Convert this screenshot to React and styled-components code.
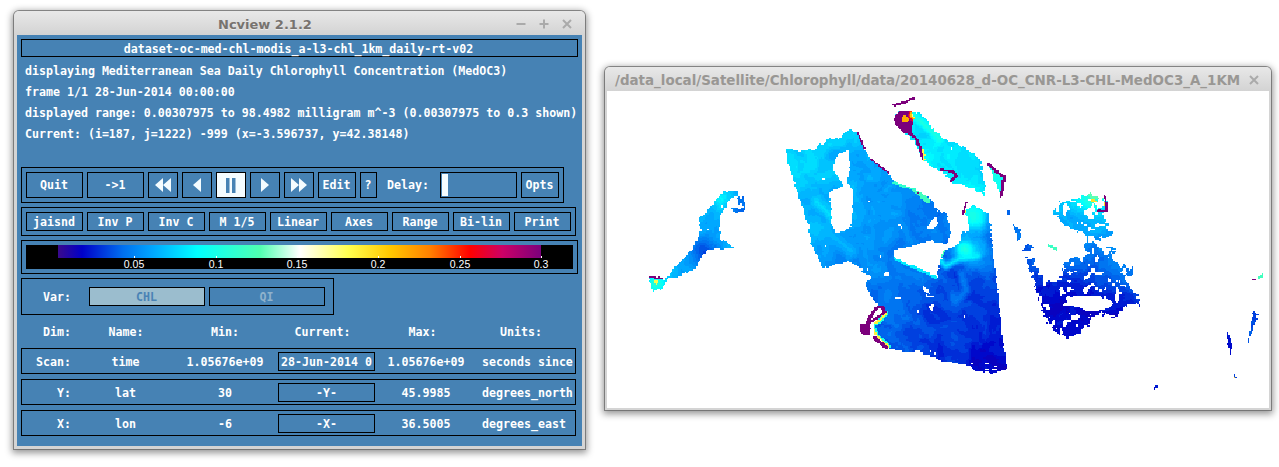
import React, { useMemo } from "react";
import styled, { createGlobalStyle } from "styled-components";

const BLUE = "#4682b4";
const PALE = "#f4fcff";

const GlobalStyle = createGlobalStyle`
  html, body {
    margin: 0;
    background: #fff;
  }
`;

/* colormap shared by the colour bar and the map */
const STOPS = [
  [0, [58, 10, 140]], [0.05, [0, 0, 200]], [0.135, [0, 112, 240]], [0.197, [0, 168, 255]],
  [0.288, [0, 255, 255]], [0.418, [80, 255, 176]], [0.5, [255, 255, 255]], [0.6, [255, 255, 80]],
  [0.687, [255, 200, 0]], [0.77, [255, 128, 0]], [0.853, [255, 0, 0]], [0.92, [204, 0, 102]],
  [1, [124, 0, 124]],
];

const colorAt = (t) => {
  let i = 0;
  while (i < STOPS.length - 2 && t > STOPS[i + 1][0]) i++;
  const [a, ca] = STOPS[i];
  const [b, cb] = STOPS[i + 1];
  const k = Math.min(1, Math.max(0, (t - a) / (b - a)));
  const c = ca.map((v, n) => Math.round(v + (cb[n] - v) * k));
  return `rgb(${c[0]},${c[1]},${c[2]})`;
};

const BAR_GRADIENT = `linear-gradient(90deg, ${STOPS.map(([p, c]) => `rgb(${c.join(",")}) ${p * 100}%`).join(", ")})`;

/* seeded noise */
const hash = (x, y) => {
  const s = Math.sin(x * 127.1 + y * 311.7) * 43758.5453;
  return s - Math.floor(s);
};
const noise = (x, y) => {
  const ix = Math.floor(x);
  const iy = Math.floor(y);
  const fx = x - ix;
  const fy = y - iy;
  const ux = fx * fx * (3 - 2 * fx);
  const uy = fy * fy * (3 - 2 * fy);
  const top = hash(ix, iy) + (hash(ix + 1, iy) - hash(ix, iy)) * ux;
  const bot = hash(ix, iy + 1) + (hash(ix + 1, iy + 1) - hash(ix, iy + 1)) * ux;
  return top + (bot - top) * uy;
};
const swirl = (x, y) => {
  const wx = x + 14 * noise(x / 22, y / 22);
  const wy = y + 14 * noise(x / 22 + 9, y / 22 + 4);
  return noise(wx / 20, wy / 20) * 0.5 + noise(wx / 7, wy / 7) * 0.35 + noise(wx / 3, wy / 3) * 0.15 - 0.5;
};

const poly = (flat) => {
  const pts = [];
  for (let i = 0; i < flat.length; i += 2) pts.push([flat[i], flat[i + 1]]);
  const xs = pts.map((p) => p[0]);
  const ys = pts.map((p) => p[1]);
  return { pts, x0: Math.min(...xs), x1: Math.max(...xs), y0: Math.min(...ys), y1: Math.max(...ys) };
};

const inPoly = ({ pts, x0, x1, y0, y1 }, x, y) => {
  if (x < x0 || x > x1 || y < y0 || y > y1) return false;
  let inside = false;
  for (let i = 0, j = pts.length - 1; i < pts.length; j = i++) {
    const [ax, ay] = pts[i];
    const [bx, by] = pts[j];
    if (ay > y !== by > y && x < ((bx - ax) * (y - ay)) / (by - ay) + ax) inside = !inside;
  }
  return inside;
};

const lineDist = (pts, x, y) => {
  if (pts.length === 1) return Math.hypot(x - pts[0][0], y - pts[0][1]);
  let best = 1e9;
  for (let i = 1; i < pts.length; i++) {
    const [ax, ay] = pts[i - 1];
    const [bx, by] = pts[i];
    const dx = bx - ax;
    const dy = by - ay;
    const k = Math.max(0, Math.min(1, ((x - ax) * dx + (y - ay) * dy) / (dx * dx + dy * dy)));
    best = Math.min(best, Math.hypot(x - ax - k * dx, y - ay - k * dy));
  }
  return best;
};

const REGIONS = [
  { // western basin, Tyrrhenian, Ionian
    shape: poly([785,148,800,150,813,148,820,143,827,138,838,137,840,135,848,128,857,132,863,147,870,158,883,168,893,180,915,188,923,195,930,198,937,210,945,212,950,232,945,242,927,240,910,245,893,248,893,257,917,267,937,276,938,260,942,250,958,243,960,232,968,230,967,217,962,210,973,204,980,208,988,213,1005,368,987,373,960,363,940,360,917,350,897,350,885,345,873,333,873,323,883,312,878,305,870,295,864,283,872,275,862,273,860,267,847,260,840,262,822,267,810,243,807,223,797,193,787,162]),
    jitter: 1.2, speck: 0.0035, value: (x, y) => 0.665 - 0.000445 * x - 0.00046 * y,
  },
  { // Alboran
    shape: poly([737,190,722,190,712,203,698,217,700,230,690,250,682,258,673,267,668,275,647,277,652,290,660,288,667,278,675,277,695,267,700,255,710,247,735,248,720,238,718,227,720,213,727,200,737,193]),
    jitter: 1.4, speck: 0.006, value: () => 0.2,
  },
  { shape: poly([730,207,742,207,742,211,730,211]), jitter: 1.5, value: () => 0.14 },
  { shape: poly([737,195,742,195,743,210,738,210]), jitter: 1.5, holes: 0.6, value: () => 0.14 },
  { // Adriatic
    shape: poly([893,117,898,108,910,112,920,113,928,122,940,137,957,143,980,158,985,197,973,187,957,183,950,180,940,170,933,167,920,157,913,140,902,130]),
    jitter: 1.8, speck: 0.004, value: (x, y) => 0.27 - 0.0006 * (x - 900) + 0.0005 * (y - 120),
  },
  { shape: poly([987,163,1003,175,1000,195,990,172]), jitter: 0.8, value: () => 0.33 },
  { // Aegean and Levantine part
    shape: poly([1053,203,1072,198,1090,193,1107,200,1103,213,1107,227,1115,232,1100,237,1103,247,1117,248,1107,255,1120,263,1133,270,1123,277,1130,287,1137,297,1140,305,1127,302,1120,310,1113,318,1103,312,1093,317,1087,312,1090,320,1077,333,1067,338,1053,327,1047,323,1025,257,1033,258,1037,272,1050,278,1057,283,1063,263,1073,257,1088,253,1082,247,1088,237,1073,227,1063,223,1053,210]),
    jitter: 2.6, speck: 0.008, holes: 0.76, value: (x, y) => Math.max(0.05, 0.25 - 0.0017 * (y - 195) - 0.0003 * (1100 - x)),
  },
  { shape: poly([1006,209,1009,209,1009,213,1006,213]), jitter: 0.6, value: () => 0.13 },
  { shape: poly([1012,223,1020,228,1020,237,1017,239]), jitter: 1, value: () => 0.14 },
  { shape: poly([1025,242,1032,247,1027,250,1022,250]), jitter: 1, value: () => 0.12 },
  { shape: poly([1047,243,1057,247,1055,249,1047,245]), jitter: 0.7, value: () => 0.38 },
  { shape: poly([1256,276,1262,273,1263,276,1258,278]), jitter: 0.5, value: () => 0.38 },
  { shape: poly([1225,327,1232,345,1229,353,1227,343]), jitter: 0.7, value: () => 0.07 },
  { shape: poly([1232,368,1235,377,1233,377]), jitter: 0.5, value: () => 0.1 },
  { shape: poly([1252,310,1258,313,1252,327,1247,343,1246,343,1249,327]), jitter: 0.8, holes: 0.75, value: () => 0.1 },
  { shape: poly([1152,388,1156,383,1158,386,1153,389]), jitter: 0.5, value: () => 0.05 },
  { shape: poly([1220,287,1228,284,1228,286,1221,288]), jitter: 0.5, holes: 0.6, value: () => 0.28 },
  { shape: poly([892,118,899,109,910,110,913,118,910,131,903,132,897,127]), jitter: 1, value: () => 1 },
  { shape: poly([858,323,868,322,870,330,866,335,860,333]), jitter: 0.9, value: () => 1 },
];

const HOLES = [
  poly([847,149,849,165,846,182,852,190,851,210,850,225,842,231,835,232,830,222,830,205,828,192,835,188,843,185,840,180,833,170,833,160,838,153]),
  poly([925,226,930,220,935,215,937,222,931,228]),
  poly([922,286,927,288,929,293,924,291]),
  poly([925,294,934,295,934,296,925,296]),
  poly([928,305,933,303,932,310,929,309]),
  poly([1065,295,1100,295,1113,302,1103,310,1088,310,1073,305,1067,303]),
  poly([882,272,888,271,888,275,883,275]),
  poly([895,296,899,296,899,298,895,298]),
  poly([1093,201,1103,199,1103,206,1096,208]),
];

const chain = (flat, w, t, soft) => ({ ...poly(flat), w, t, soft });

const LINES = [
  chain([937,257,945,265,957,258,977,255], 5, 0.3, true),
  chain([960,273,965,290,955,300], 6, 0.16, true),
  chain([840,225,815,200], 8, 0.27, true),
  chain([825,230,850,250], 10, 0.22, true),
  chain([912,114,925,125,938,137], 6, 0.36, true),
  chain([895,257,935,275], 2.5, 0.27),
  chain([942,250,937,258], 2, 0.4),
  chain([912,187,927,200], 2.5, 0.4),
  chain([893,182,915,188], 1.6, 0.36),
  chain([857,132,863,147], 0.8, 1),
  chain([870,158,888,172], 0.8, 1),
  chain([917,192], 1, 1),
  chain([962,212,965,202], 2.4, 0.62),
  chain([962,212,965,202], 1, 1),
  chain([893,104,905,101,912,97], 1.3, 1),
  chain([904,118], 3.5, 0.72),
  chain([921,150,922,158], 2.4, 0.6),
  chain([905,130,915,137,919,148,921,157], 1.4, 1),
  chain([940,169,952,170,955,175,950,180], 1.2, 1),
  chain([987,163,995,170,1003,176,1001,190,1000,195], 1.4, 1),
  chain([1090,194,1100,196], 3, 0.42),
  chain([1092,199,1097,205,1103,203], 1.6, 0.65),
  chain([1103,195,1106,205,1105,210,1097,210], 1.1, 1),
  chain([648,276,660,277], 0.9, 1),
  chain([655,281], 2, 0.6),
  chain([885,312,878,320,871,323,875,335,887,345], 2.6, 0.33),
  chain([885,312,878,320,871,323,875,335,887,345], 1.2, 0.62),
  chain([866,322,871,313,875,307,881,306,884,311], 1.6, 1),
  chain([884,311,877,316,869,321], 1.4, 1),
  chain([873,337,885,346], 1.8, 1),
  chain([1252,278,1257,278], 0.7, 1),
  chain([1234,376], 0.8, 0.7),
];

const SPOTS = [
  [972, 215, 17, 0.19], [975, 250, 15, 0.1], [962, 248, 9, 0.17], [720, 195, 12, 0.08],
  [655, 283, 10, 0.14], [705, 250, 15, -0.1], [1090, 198, 12, 0.12],
];

const MAP_BINS = 72;

const buildMap = () => {
  const bins = Array.from({ length: MAP_BINS }, () => []);
  const block = 1.4;
  for (let py = 91; py < 408; py++) {
    const y = Math.floor(py / block) * block;
    let runBin = -1;
    let runX = 0;
    const flush = (end) => {
      if (runBin >= 0) bins[runBin].push(`M${runX} ${py}h${end - runX}v1h-${end - runX}z`);
    };
    for (let px = 607; px < 1269; px++) {
      const x = Math.floor(px / block) * block;
      const jx = noise(x / 2.6, y / 2.6) - 0.5;
      const jy = noise(x / 2.6 + 31, y / 2.6 + 17) - 0.5;
      let t = -1;
      for (const r of REGIONS) {
        if (inPoly(r.shape, x + jx * r.jitter * 2, y + jy * r.jitter * 2)) {
          const holey = r.holes && noise(x / 4, y / 4) > r.holes;
          const bottom = r.speck && y > 362 && hash(Math.floor(x / 3), Math.floor(y / 1.5)) < 0.12;
          const speck = r.speck && hash(Math.floor(x / 2.1), Math.floor(y / 2.1)) < r.speck;
          if (!holey && !bottom && !speck) t = r.value(x, y) >= 0.9 ? 1 : r.value(x, y) + swirl(x, y) * 0.075;
        }
      }
      if (t >= 0 && HOLES.some((h) => inPoly(h, x + jx * 1.6, y + jy * 1.6))) t = -1;
      if (t >= 0 && t < 0.9) {
        for (const [sx, sy, sr, sv] of SPOTS) {
          const d = ((x - sx) ** 2 + (y - sy) ** 2) / (sr * sr);
          if (d < 4) t += sv * Math.exp(-d);
        }
      }
      for (const l of LINES) {
        if (x < l.x0 - l.w || x > l.x1 + l.w || y < l.y0 - l.w || y > l.y1 + l.w) continue;
        const d = lineDist(l.pts, x + jx, y + jy);
        if (d >= l.w) continue;
        if (l.soft) {
          if (t >= 0) t += (l.t - t) * (1 - d / l.w) * 0.8;
        } else if (t >= 0 || l.t === 1) {
          t = l.t;
        }
      }
      const bin = t < 0 ? -1 : Math.min(MAP_BINS - 1, Math.max(0, Math.round(t * (MAP_BINS - 1))));
      if (bin !== runBin) {
        flush(px);
        runBin = bin;
        runX = px;
      }
    }
    flush(1269);
  }
  return bins.map((parts, i) => ({ d: parts.join(""), fill: colorAt(i / (MAP_BINS - 1)) }));
};

const SeaMap = () => {
  const paths = useMemo(buildMap, []);
  return (
    <MapSvg viewBox="607 91 662 317" shapeRendering="crispEdges">
      {paths.map((p) => p.d && <path key={p.fill} d={p.d} fill={p.fill} />)}
    </MapSvg>
  );
};

/* window chrome */
const Desktop = styled.div`
  display: flex;
  align-items: flex-start;
  gap: 20px;
  width: 1279px;
  height: 467px;
  padding-left: 14px;
  box-sizing: border-box;
  overflow: hidden;
`;

const Window = styled.div`
  flex: none;
  width: ${(p) => p.$w}px;
  margin-top: ${(p) => p.$top}px;
  padding: 0 ${(p) => p.$edge}px ${(p) => p.$edge}px;
  box-sizing: border-box;
  background: #d4d4d4;
  border-radius: 5px 5px 0 0;
  box-shadow: 0 0 0 1px rgba(90, 90, 90, 0.65), 0 2px 7px 2px rgba(0, 0, 0, 0.42);
`;

const TitleBar = styled.div`
  position: relative;
  display: flex;
  align-items: center;
  box-sizing: border-box;
  height: 24px;
  margin: 0 -${(p) => p.$edge}px;
  padding: 2px ${(p) => p.$right}px 0 10px;
  border-radius: 5px 5px 0 0;
  background: linear-gradient(#e8e8e8, #d3d3d3);
  font-family: "DejaVu Sans", sans-serif;
  font-weight: bold;
`;

const MainTitle = styled.div`
  position: absolute;
  left: 204px;
  font-size: 13px;
  color: #77736f;
  text-shadow: 0 1px 0 rgba(255, 255, 255, 0.5);
`;

const PathTitle = styled.div`
  font-size: 13.44px;
  color: #999794;
  white-space: nowrap;
`;

const TitleButtons = styled.div`
  display: flex;
  gap: 11px;
  margin-left: auto;
`;

const WinIcon = styled.svg`
  display: block;
  width: 12px;
  height: 12px;
  stroke: #aaa;
  stroke-width: 2;
  fill: none;
`;

const WinGlyph = ({ kind }) => (
  <WinIcon viewBox="0 0 12 12">
    {kind !== "close" && <path d="M1.5 6h9" />}
    {kind === "plus" && <path d="M6 1.5v9" />}
    {kind === "close" && <path d="M2 2l8 8M10 2l-8 8" />}
  </WinIcon>
);

const MapArea = styled.div`
  height: 317px;
  background: #fff;
`;

const MapSvg = styled.svg`
  display: block;
  width: 662px;
  height: 317px;
  filter: blur(0.3px);
`;

/* ncview panel */
const Panel = styled.div`
  height: 411px;
  padding: 4px;
  box-sizing: border-box;
  background: ${BLUE};
  color: #fff;
  font-family: "DejaVu Sans Mono", monospace;
  font-weight: bold;
  font-size: 11.62px;
`;

const Box = styled.div`
  box-sizing: border-box;
  width: ${(p) => p.$w}px;
  height: ${(p) => p.$h}px;
  margin-top: ${(p) => p.$mt || 0}px;
  border: 1px solid #000;
`;

const TitleBox = styled(Box)`
  display: flex;
  align-items: center;
  justify-content: center;
  padding: 1px 2px 0 0;
`;

const Info = styled.div`
  margin-top: 4px;
  padding-left: 4px;
  height: 84px;
`;

const InfoLine = styled.div`
  height: 21px;
  line-height: 21px;
  white-space: nowrap;
`;

const ButtonRow = styled(Box)`
  display: flex;
  align-items: center;
  gap: 4px;
  padding-left: 4px;
`;

const Btn = styled.div`
  flex: none;
  display: flex;
  align-items: center;
  justify-content: center;
  box-sizing: border-box;
  width: ${(p) => p.$w || 57}px;
  height: ${(p) => p.$h}px;
  padding: ${(p) => (p.$h === 19 ? "1px 1px 0 0" : "0 1px 0 0")};
  border: 1px solid #000;
  background: ${(p) => (p.$on ? PALE : "transparent")};
`;

const TransportBtn = styled(Btn)`
  width: 30px;
  padding: 0;
`;

const TransportIcon = styled.svg`
  display: block;
  width: 28px;
  height: 24px;
  fill: ${(p) => (p.$dark ? BLUE : PALE)};
`;

const DelayLabel = styled.div`
  width: 55px;
  padding-left: 6px;
  box-sizing: border-box;
  white-space: nowrap;
`;

const Slider = styled.div`
  box-sizing: border-box;
  width: 77px;
  height: 26px;
  padding: 1px;
  border: 1px solid #000;
`;

const Thumb = styled.div`
  width: 6px;
  height: 100%;
  background: ${PALE};
`;

const BarBox = styled(Box)`
  padding: 4px;
`;

const BarInner = styled.div`
  position: relative;
  width: 547px;
  height: 24px;
  padding-left: 32px;
  box-sizing: border-box;
  background: #000;
`;

const BarStrip = styled.div`
  width: 483px;
  height: 13px;
  background: ${BAR_GRADIENT};
`;

const Tick = styled.div`
  position: absolute;
  top: 11px;
  width: 1px;
  height: 2px;
  background: #fff;
`;

const TickLabel = styled.div`
  position: absolute;
  top: 13px;
  transform: translateX(-50%);
  font-family: "Liberation Sans", sans-serif;
  font-weight: normal;
  font-size: 10.5px;
  line-height: 12px;
  color: #fff;
`;

const VarBox = styled(Box)`
  display: flex;
  align-items: center;
  gap: 4px;
`;

const VarLabel = styled.div`
  width: 63px;
  padding-left: 21px;
  box-sizing: border-box;
`;

const VarBtn = styled(Btn)`
  background: ${(p) => (p.$on ? "#9bbdce" : "transparent")};
  color: ${(p) => (p.$on ? "#4a83b5" : "#8fb2cc")};
`;

const HeaderRow = styled.div`
  display: grid;
  grid-template-columns: 50px 110px 88px 107px 93px 104px;
  align-items: center;
  box-sizing: border-box;
  height: 33px;
`;

const DimRow = styled(Box)`
  display: grid;
  grid-template-columns: 49px 109px 90px 105px 102px 1fr;
  align-items: center;
`;

const Cell = styled.div`
  padding-top: 1px;
  text-align: ${(p) => p.$align || "center"};
  white-space: nowrap;
`;

const UnitCell = styled.div`
  padding: 1px 0 0 5px;
  white-space: nowrap;
`;

const CurrentBox = styled.div`
  box-sizing: border-box;
  justify-self: end;
  width: 97px;
  height: 19px;
  line-height: 18px;
  border: 1px solid #000;
  overflow: hidden;
  text-align: center;
  white-space: nowrap;
`;

const TOP_BUTTONS = ["jaisnd", "Inv P", "Inv C", "M 1/5", "Linear", "Axes", "Range", "Bi-lin", "Print"];
const TICKS = [["0.05", 108], ["0.1", 190], ["0.15", 271], ["0.2", 352], ["0.25", 434], ["0.3", 515]];
const DIMS = [
  { dim: "Scan:", name: "time", min: "1.05676e+09", current: "28-Jun-2014 0", max: "1.05676e+09", units: "seconds since" },
  { dim: "Y:", name: "lat", min: "30", current: "-Y-", max: "45.9985", units: "degrees_north" },
  { dim: "X:", name: "lon", min: "-6", current: "-X-", max: "36.5005", units: "degrees_east" },
];

const Transport = ({ d, dark }) => (
  <TransportIcon viewBox="0 0 28 24" $dark={dark}>
    <path d={d} />
  </TransportIcon>
);

const NcviewWindow = () => (
  <Window $w={571} $top={11} $edge={3}>
    <TitleBar $edge={3} $right={12}>
      <MainTitle>Ncview 2.1.2</MainTitle>
      <TitleButtons>
        <WinGlyph kind="min" />
        <WinGlyph kind="plus" />
        <WinGlyph kind="close" />
      </TitleButtons>
    </TitleBar>
    <Panel>
      <TitleBox $w={557} $h={18}>dataset-oc-med-chl-modis_a-l3-chl_1km_daily-rt-v02</TitleBox>
      <Info>
        <InfoLine>displaying Mediterranean Sea Daily Chlorophyll Concentration (MedOC3)</InfoLine>
        <InfoLine>frame 1/1 28-Jun-2014 00:00:00</InfoLine>
        <InfoLine>displayed range: 0.00307975 to 98.4982 milligram m^-3 (0.00307975 to 0.3 shown)</InfoLine>
        <InfoLine>Current: (i=187, j=1222) -999 (x=-3.596737, y=42.38148)</InfoLine>
      </Info>

      <ButtonRow $w={543} $h={36} $mt={22}>
        <Btn $h={26}>Quit</Btn>
        <Btn $h={26}>-&gt;1</Btn>
        <TransportBtn $h={26}><Transport d="M6 12l8-7v14zM14 12l8-7v14z" /></TransportBtn>
        <TransportBtn $h={26}><Transport d="M10 12l8-7v14z" /></TransportBtn>
        <TransportBtn $h={26} $on><Transport dark d="M9 5h3.500v15H9zM15 5h3.500v15H15z" /></TransportBtn>
        <TransportBtn $h={26}><Transport d="M10 5l8 7-8 7z" /></TransportBtn>
        <TransportBtn $h={26}><Transport d="M6 5l8 7-8 7zM14 5l8 7-8 7z" /></TransportBtn>
        <Btn $w={38} $h={26}>Edit</Btn>
        <Btn $w={17} $h={26}>?</Btn>
        <DelayLabel>Delay:</DelayLabel>
        <Slider><Thumb /></Slider>
        <Btn $w={38} $h={26}>Opts</Btn>
      </ButtonRow>

      <ButtonRow $w={555} $h={29} $mt={4}>
        {TOP_BUTTONS.map((b) => <Btn key={b} $h={19}>{b}</Btn>)}
      </ButtonRow>

      <BarBox $w={557} $h={34} $mt={4}>
        <BarInner>
          <BarStrip />
          {TICKS.map(([label, x]) => (
            <React.Fragment key={label}>
              <Tick style={{ left: x }} />
              <TickLabel style={{ left: x }}>{label}</TickLabel>
            </React.Fragment>
          ))}
        </BarInner>
      </BarBox>

      <VarBox $w={313} $h={37} $mt={4}>
        <VarLabel>Var:</VarLabel>
        <VarBtn $w={116} $h={19} $on>CHL</VarBtn>
        <VarBtn $w={116} $h={19}>QI</VarBtn>
      </VarBox>

      <HeaderRow>
        <Cell $align="right">Dim:</Cell>
        <Cell>Name:</Cell>
        <Cell>Min:</Cell>
        <Cell>Current:</Cell>
        <Cell>Max:</Cell>
        <Cell>Units:</Cell>
      </HeaderRow>

      {DIMS.map((d, i) => (
        <DimRow key={d.dim} $w={555} $h={26} $mt={i ? 5 : 0}>
          <Cell $align="right">{d.dim}</Cell>
          <Cell>{d.name}</Cell>
          <Cell>{d.min}</Cell>
          <CurrentBox>{d.current}</CurrentBox>
          <Cell>{d.max}</Cell>
          <UnitCell>{d.units}</UnitCell>
        </DimRow>
      ))}
    </Panel>
  </Window>
);

const ImageWindow = () => (
  <Window $w={666} $top={67} $edge={2}>
    <TitleBar $edge={2} $right={11}>
      <PathTitle>/data_local/Satellite/Chlorophyll/data/20140628_d-OC_CNR-L3-CHL-MedOC3_A_1KM</PathTitle>
      <TitleButtons>
        <WinGlyph kind="close" />
      </TitleButtons>
    </TitleBar>
    <MapArea>
      <SeaMap />
    </MapArea>
  </Window>
);

export default function App() {
  return (
    <Desktop>
      <GlobalStyle />
      <NcviewWindow />
      <ImageWindow />
    </Desktop>
  );
}
